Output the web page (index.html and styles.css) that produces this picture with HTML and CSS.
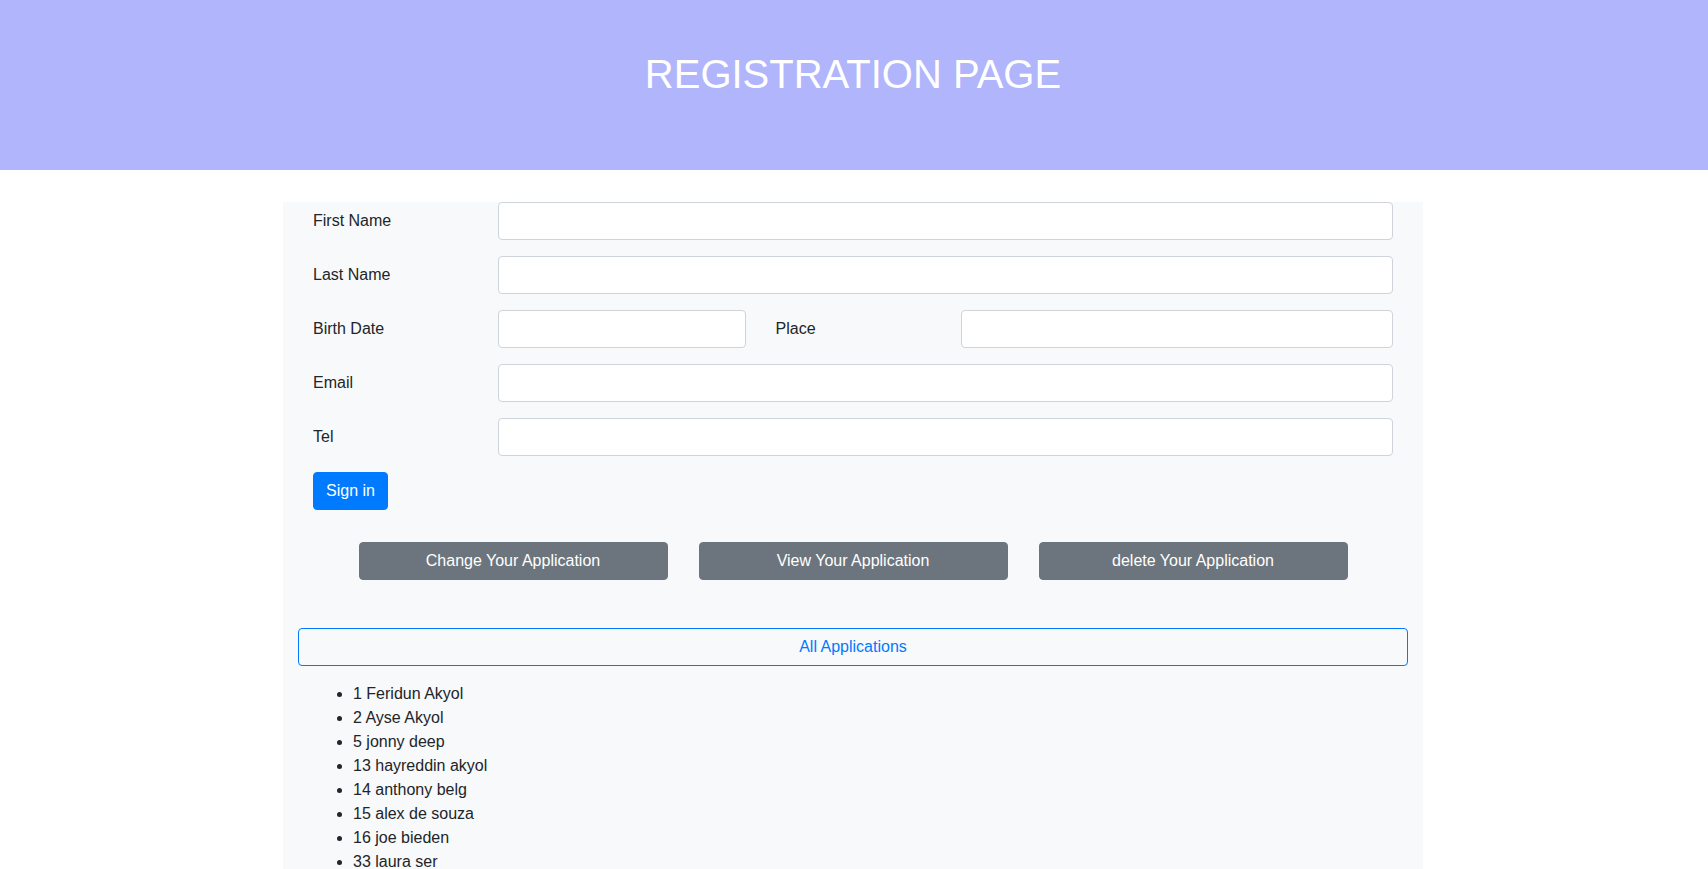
FILE: index.html
```html
<!DOCTYPE html>
<html lang="en">
<head>
<meta charset="utf-8">
<title>Registration Page</title>
<link rel="stylesheet" href="styles.css">
</head>
<body>
<header class="hero">
  <h1 class="hero-title">REGISTRATION PAGE</h1>
</header>
<main class="container">
  <form class="reg-form">
    <div class="field-row">
      <label class="col-label">First Name</label>
      <div class="col-wide"><input class="text-input" type="text"></div>
    </div>
    <div class="field-row">
      <label class="col-label">Last Name</label>
      <div class="col-wide"><input class="text-input" type="text"></div>
    </div>
    <div class="field-row">
      <label class="col-label">Birth Date</label>
      <div class="col-3"><input class="text-input" type="text"></div>
      <label class="col-label">Place</label>
      <div class="col-5"><input class="text-input" type="text"></div>
    </div>
    <div class="field-row">
      <label class="col-label">Email</label>
      <div class="col-wide"><input class="text-input" type="text"></div>
    </div>
    <div class="field-row">
      <label class="col-label">Tel</label>
      <div class="col-wide"><input class="text-input" type="text"></div>
    </div>
    <div class="submit-row">
      <button type="button" class="btn btn-primary">Sign in</button>
    </div>
  </form>
  <div class="action-row">
    <button type="button" class="btn btn-secondary action-btn">Change Your Application</button>
    <button type="button" class="btn btn-secondary action-btn">View Your Application</button>
    <button type="button" class="btn btn-secondary action-btn">delete Your Application</button>
  </div>
  <button type="button" class="btn btn-outline">All Applications</button>
  <ul class="app-list">
    <li>1 Feridun Akyol</li>
    <li>2 Ayse Akyol</li>
    <li>5 jonny deep</li>
    <li>13 hayreddin akyol</li>
    <li>14 anthony belg</li>
    <li>15 alex de souza</li>
    <li>16 joe bieden</li>
    <li>33 laura ser</li>
  </ul>
</main>
</body>
</html>
```

FILE: styles.css
```css
* {
  box-sizing: border-box;
}

html, body {
  margin: 0;
  padding: 0;
}

body {
  font-family: "Liberation Sans", Arial, Helvetica, sans-serif;
  font-size: 16px;
  line-height: 1.5;
  color: #212529;
  background: #ffffff;
}

.hero {
  background: #b1b5fb;
  height: 170px;
  padding: 50px 2px 0 0;
}

.hero-title {
  margin: 0;
  text-align: center;
  color: #ffffff;
  font-size: 40px;
  font-weight: 400;
  line-height: 48px;
}

.container {
  width: 1140px;
  margin: 32px 0 0 calc(50% - 571px);
  padding: 0 15px;
  background: #f8f9fa;
}

.reg-form {
  margin: 0;
}

.field-row {
  display: flex;
  margin-bottom: 16px;
}

.col-label {
  flex: 0 0 185px;
  padding: 7px 15px;
  line-height: 24px;
}

.col-wide {
  flex: 1 1 auto;
  padding: 0 15px;
}

.col-3 {
  flex: 0 0 277.5px;
  padding: 0 15px;
}

.col-5 {
  flex: 0 0 462.5px;
  padding: 0 15px;
}

.text-input {
  display: block;
  width: 100%;
  height: 38px;
  padding: 6px 12px;
  font: inherit;
  color: #495057;
  background: #ffffff;
  border: 1px solid #ced4da;
  border-radius: 4px;
}

.submit-row {
  padding: 0 15px;
  margin-bottom: 32px;
}

.btn {
  display: inline-block;
  font-family: inherit;
  font-size: 16px;
  line-height: 24px;
  padding: 6px 12px;
  border: 1px solid transparent;
  border-radius: 4px;
  text-align: center;
  cursor: pointer;
}

.btn-primary {
  background: #007bff;
  border-color: #007bff;
  color: #ffffff;
}

.btn-secondary {
  background: #6c757d;
  border-color: #6c757d;
  color: #ffffff;
}

.action-row {
  display: flex;
  justify-content: center;
  gap: 31px;
  margin-bottom: 48px;
}

.action-btn {
  width: 309px;
}

.btn-outline {
  display: block;
  width: 100%;
  background: transparent;
  border-color: #007bff;
  color: #007bff;
}

.app-list {
  margin: 16px 0 16px;
  padding: 0 0 16px 55px;
}

.app-list li {
  line-height: 24px;
}
```
